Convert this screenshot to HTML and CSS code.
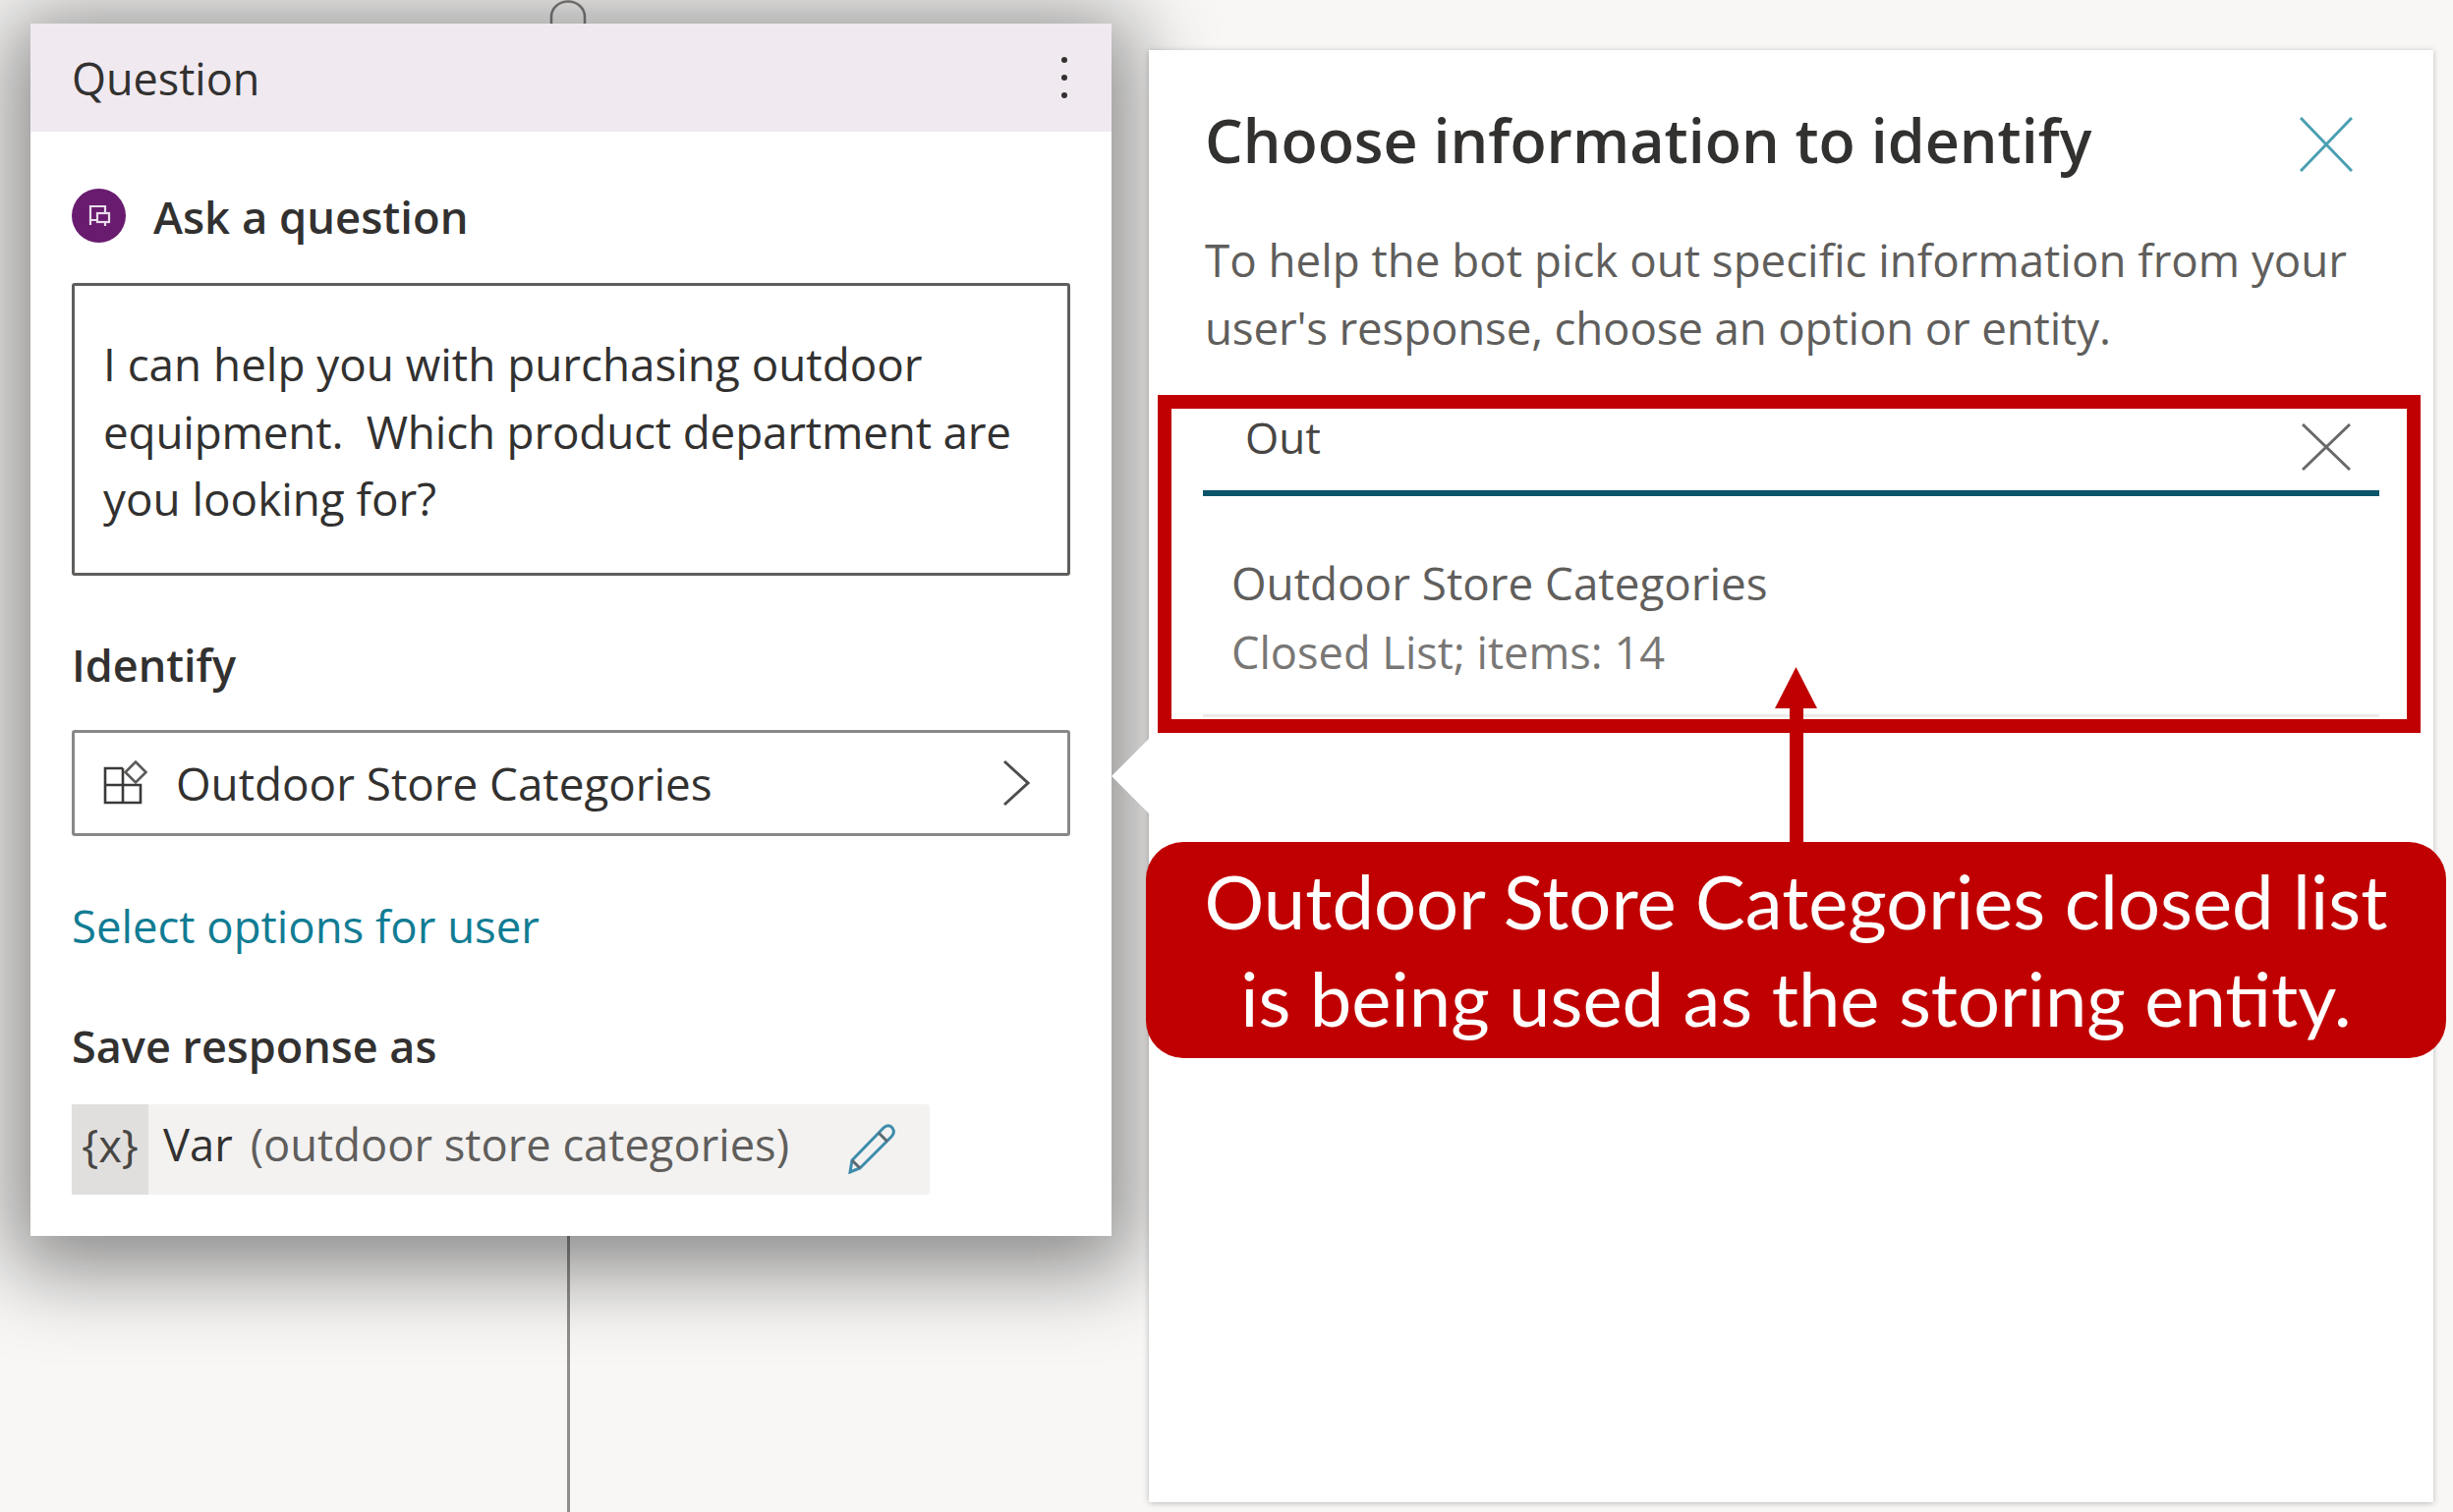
FILE: index.html
```html
<!DOCTYPE html>
<html>
<head>
  <title>Question node</title>
  <link rel="stylesheet" href="styles.css">
</head>
<body>
  <div class="canvas">
    <svg class="connector-top" width="40" height="24" viewBox="0 0 40 24"><path d="M3 24V17a17 15.500 0 0 1 34 0v7" fill="none" stroke="#7f7f7f" stroke-width="2.500"/></svg>
    <div class="connector-line"></div>

    <div class="card">
      <div class="card-head">
        <span>Question</span>
        <div class="kebab"><i></i><i></i><i></i></div>
      </div>
      <div class="card-body">
        <div class="ask">
          <span class="ask-icon">
            <svg width="30" height="30" viewBox="0 0 30 30" fill="none" stroke="#e9dcec" stroke-width="2.200">
              <path d="M12 19H6V5h15v6"/>
              <path d="M6 19v5"/>
              <rect x="13" y="12" width="12" height="9"/>
              <path d="M21 21v4"/>
            </svg>
          </span>
          <span class="ask-label">Ask a question</span>
        </div>
        <div class="message">I can help you with purchasing outdoor<br><span class="tight">equipment.&nbsp; Which product department are</span><br>you looking for?</div>
        <div class="label identify-label">Identify</div>
        <div class="select">
          <svg class="select-icon" width="46" height="46" viewBox="0 0 46 46" fill="none" stroke="#3b3a39" stroke-width="2.600">
            <path d="M20 8H2v35h36V25H2"/>
            <path d="M20 8v35"/>
            <path d="M33 1.500l10.500 10.500L33 22.500 22.500 12z" stroke="#5c5a58"/>
          </svg>
          <span class="select-text">Outdoor Store Categories</span>
          <svg class="chevron" width="28" height="48" viewBox="0 0 28 48" fill="none" stroke="#4f4d4b" stroke-width="3"><path d="M2 2l24 22L2 46"/></svg>
        </div>
        <div class="link">Select options for user</div>
        <div class="label save-label">Save response as</div>
        <div class="var-chip">
          <span class="var-x">{x}</span>
          <span class="var-name">Var</span>
          <span class="var-desc">(outdoor store categories)</span>
          <svg class="pencil" width="50" height="52" viewBox="0 0 50 52" fill="none" stroke="#3d8cab" stroke-width="3">
            <path d="M4 38L36 5c3-3 7-3 9 0s2 6-1 9L12 46 2 50z"/>
            <path d="M31 10l9 9" stroke="#5a6a72"/>
            <path d="M4 38l8 8" stroke="#5a6a72"/>
          </svg>
        </div>
      </div>
    </div>

    <div class="panel">
      <div class="notch"></div>
      <div class="panel-head">
        <h2>Choose information to identify</h2>
        <svg width="54" height="56" viewBox="0 0 54 56" stroke="#4a9fb2" stroke-width="3" fill="none"><path d="M1 1l52 54M53 1L1 55"/></svg>
      </div>
      <p class="panel-desc">To help the bot pick out specific information from your<br><span class="tight">user's response, choose an option or entity.</span></p>
      <div class="red-box">
        <div class="search">
          <span>Out</span>
          <svg width="50" height="48" viewBox="0 0 50 48" stroke="#6b6967" stroke-width="3" fill="none"><path d="M1 1l48 46M49 1L1 47"/></svg>
        </div>
        <div class="option">
          <div class="option-name">Outdoor Store Categories</div>
          <div class="option-meta">Closed List; items: 14</div>
        </div>
      </div>
      <div class="arrow"></div>
      <div class="callout">Outdoor Store Categories closed list<br>is being used as the storing entity.</div>
    </div>
  </div>
</body>
</html>
```

FILE: styles.css
```css
html, body {
  margin: 0;
  height: 100%;
  overflow: hidden;
}
body {
  background: #f8f7f6;
  color: #323130;
  font-family: 'Open Sans', sans-serif;
}
.canvas {
  position: relative;
  display: flex;
  align-items: flex-start;
  height: 1539px;
  padding: 24px 0 0 31px;
  box-sizing: border-box;
}
.connector-top {
  position: absolute;
  left: 558px;
  top: 0;
}
.connector-line {
  position: absolute;
  left: 577px;
  top: 1250px;
  bottom: 0;
  width: 3px;
  background: #8f8e8d;
}
.tight {
  letter-spacing: -0.170px;
}

/* question card */
.card {
  position: relative;
  z-index: 1;
  width: 1100px;
  height: 1234px;
  background: #fff;
  box-shadow: 0 14px 80px 20px rgba(0,0,0,.45);
}
.card-head {
  display: flex;
  align-items: center;
  justify-content: space-between;
  height: 110px;
  padding: 0 45px 0 42px;
  background: #f0e9f0;
  font-size: 45px;
}
.kebab {
  display: flex;
  flex-direction: column;
  gap: 12px;
}
.kebab i {
  width: 6px;
  height: 6px;
  border-radius: 50%;
  background: #323130;
}
.card-body {
  padding: 58px 42px 0;
}
.ask {
  display: flex;
  align-items: center;
  gap: 28px;
  height: 55px;
}
.ask-icon {
  display: flex;
  align-items: center;
  justify-content: center;
  width: 55px;
  height: 55px;
  border-radius: 50%;
  background: #691c6f;
}
.ask-label {
  font-size: 45.400px;
  font-weight: 600;
}
.label {
  font-size: 45px;
  font-weight: 600;
}
.message {
  height: 298px;
  margin-top: 41px;
  padding: 45px 0 0 29px;
  box-sizing: border-box;
  border: 3px solid #605e5c;
  border-radius: 3px;
  font-size: 45.800px;
  line-height: 68.500px;
}
.identify-label {
  margin-top: 61px;
  line-height: 60px;
}
.select {
  display: flex;
  align-items: center;
  height: 108px;
  margin-top: 36px;
  padding: 0 38px 0 29px;
  box-sizing: border-box;
  border: 3px solid #8a8886;
  border-radius: 3px;
  font-size: 45.800px;
}
.select-icon {
  margin-right: 28px;
}
.select-text {
  flex: 1;
}
.link {
  margin-top: 61px;
  color: #117c93;
  font-size: 45.500px;
  line-height: 60px;
}
.save-label {
  margin-top: 63px;
  line-height: 60px;
}
.var-chip {
  display: flex;
  align-items: center;
  width: 873px;
  height: 92px;
  margin-top: 29px;
  background: #f3f2f1;
  border-radius: 3px;
  font-size: 45.300px;
}
.var-x {
  display: flex;
  align-items: center;
  justify-content: center;
  align-self: stretch;
  width: 78px;
  padding-bottom: 10px;
  box-sizing: border-box;
  background: #e1dfdd;
  color: #484644;
}
.var-name {
  margin: 0 0 12px 15px;
}
.var-desc {
  flex: 1;
  margin: 0 0 12px 18px;
  color: #605e5c;
}
.pencil {
  margin: 0 33px 2px 0;
}

/* side panel */
.panel {
  position: relative;
  z-index: 2;
  width: 1307px;
  height: 1478px;
  margin: 27px 0 0 38px;
  background: #fff;
  box-shadow: 0 1px 6px rgba(0,0,0,.25);
}
.notch {
  position: absolute;
  left: -38px;
  top: 701px;
  width: 38px;
  height: 76px;
  background: #fff;
  clip-path: polygon(100% 0, 0 50%, 100% 100%);
}
.panel-head {
  display: flex;
  align-items: center;
  justify-content: space-between;
  height: 76px;
  padding: 57px 82px 0 57px;
}
.panel-head h2 {
  margin: 0 0 6px;
  font-size: 61px;
  font-weight: 600;
  line-height: 76px;
}
.panel-head svg {
  margin-top: 2px;
}
.panel-desc {
  margin: 46px 0 0;
  padding-left: 57px;
  color: #605e5c;
  font-size: 45.700px;
  line-height: 69px;
}
.red-box {
  width: 1285px;
  height: 344px;
  margin: 34px 0 0 9px;
  padding: 0 28px 0 32px;
  box-sizing: border-box;
  border: 14px solid #c00000;
}
.search {
  display: flex;
  align-items: flex-start;
  justify-content: space-between;
  height: 83px;
  padding: 0 29px 0 43px;
  border-bottom: 6px solid #0b556a;
  font-size: 44px;
  color: #484644;
}
.search span {
  line-height: 58px;
}
.search svg {
  margin-top: 15px;
}
.option {
  height: 225px;
  padding: 0 0 0 29px;
  box-sizing: border-box;
  border-bottom: 3px solid #edebe9;
}
.option-name {
  padding-top: 54px;
  color: #605e5c;
  font-size: 45.800px;
  line-height: 69.500px;
}
.option-meta {
  color: #797775;
  font-size: 45.200px;
  line-height: 69.500px;
}
.arrow {
  position: absolute;
  left: 637px;
  top: 628px;
  width: 43px;
  height: 178px;
  background: linear-gradient(#c00000, #c00000) center 40px / 14px 138px no-repeat;
}
.arrow::before {
  content: "";
  position: absolute;
  top: 0;
  left: 0;
  width: 43px;
  height: 42px;
  background: #c00000;
  clip-path: polygon(50% 0, 100% 100%, 0 100%);
}
.callout {
  position: absolute;
  left: -3px;
  top: 806px;
  width: 1323px;
  height: 220px;
  padding-top: 10px;
  box-sizing: border-box;
  background: #c00000;
  border-radius: 38px;
  color: #fff;
  font-family: 'Lato', sans-serif;
  font-size: 76px;
  line-height: 99px;
  text-align: center;
}
```
